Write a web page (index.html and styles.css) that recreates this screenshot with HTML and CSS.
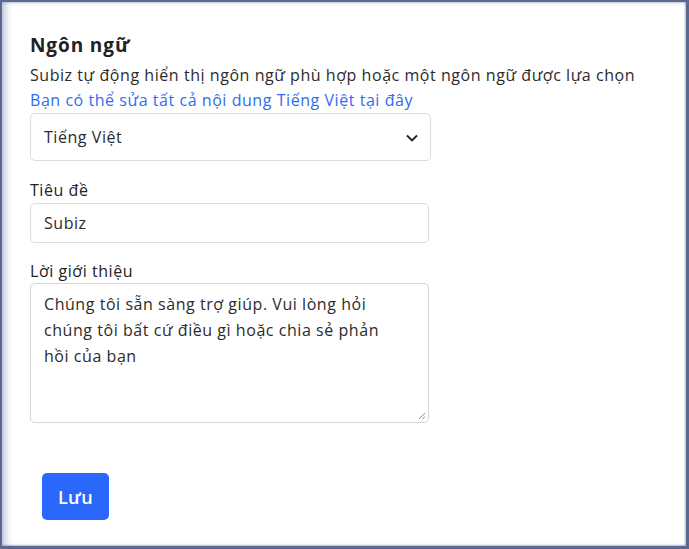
FILE: index.html
```html
<!DOCTYPE html>
<html lang="vi">
<head>
<meta charset="utf-8">
<title>Ngôn ngữ</title>
<link rel="stylesheet" href="styles.css">
</head>
<body>
<div class="frame">
  <div class="panel">
    <h2 class="title">Ngôn ngữ</h2>
    <p class="desc">Subiz tự động hiển thị ngôn ngữ phù hợp hoặc một ngôn ngữ được lựa chọn</p>
    <a class="link" href="#">Bạn có thể sửa tất cả nội dung Tiếng Việt tại đây</a>
    <div class="select">
      <span>Tiếng Việt</span>
      <svg class="chev" width="12" height="8" viewBox="0 0 12 8"><path d="M1 1.5 L6 6.5 L11 1.5" fill="none" stroke="#222" stroke-width="1.8"/></svg>
    </div>
    <label class="label">Tiêu đề</label>
    <div class="input">Subiz</div>
    <label class="label label-2">Lời giới thiệu</label>
    <div class="textarea">Chúng tôi sẵn sàng trợ giúp. Vui lòng hỏi chúng tôi bất cứ điều gì hoặc chia sẻ phản hồi của bạn
      <svg class="grip" width="8" height="8" viewBox="0 0 8 8"><path d="M7 1 L1 7 M7 4.5 L4.5 7" stroke="#888" stroke-width="1"/></svg>
    </div>
    <button class="btn">Lưu</button>
  </div>
</div>
</body>
</html>
```
FILE: styles.css
```css
html, body {
  margin: 0;
  padding: 0;
  background: #56648e;
}
.frame {
  box-sizing: border-box;
  height: 549px;
  margin: 0;
  border-style: solid;
  border-color: #5a6892;
  border-width: 2px 3px 3px 2px;
  background: #fff;
  box-shadow: inset 8px 0 7px -4px rgba(90,104,146,0.35), inset 0 2px 3px -1px rgba(90,104,146,0.35), inset -2px 0 2px -1px rgba(90,104,146,0.4), inset 0 -2px 2px -1px rgba(90,104,146,0.4);
  font-family: "Open Sans", "Noto Sans", sans-serif;
  color: #2b2b2b;
  letter-spacing: 0.55px;
}
.panel {
  display: flex;
  flex-direction: column;
  align-items: flex-start;
  padding: 29px 0 0 28px;
}
.title {
  margin: 0;
  font-size: 19px;
  line-height: 28px;
  font-weight: 700;
  letter-spacing: 0.9px;
  color: #222;
}
.desc {
  margin: 4px 0 0;
  font-size: 16px;
  line-height: 25px;
}
.link {
  font-size: 16px;
  line-height: 25px;
  color: #2f6cf0;
  text-decoration: none;
}
.select {
  box-sizing: border-box;
  width: 401px;
  height: 48px;
  margin-top: 0;
  border: 1px solid #dcdcdc;
  border-radius: 5px;
  display: flex;
  align-items: center;
  justify-content: space-between;
  padding: 0 12px 0 13px;
  font-size: 16px;
}
.chev { margin-top: 2px; }
.label {
  margin-top: 17px;
  font-size: 16px;
  line-height: 24px;
  color: #222;
}
.label-2 { margin-top: 16px; }
.input {
  box-sizing: border-box;
  width: 399px;
  height: 40px;
  margin-top: 1px;
  border: 1px solid #dcdcdc;
  border-radius: 5px;
  display: flex;
  align-items: center;
  padding: 0 13px;
  font-size: 16px;
}
.textarea {
  position: relative;
  box-sizing: border-box;
  width: 399px;
  height: 140px;
  margin-top: 0;
  border: 1px solid #d4d4d4;
  border-radius: 5px;
  padding: 7px 40px 0 13px;
  font-size: 16px;
  line-height: 26px;
}
.grip {
  position: absolute;
  right: 2px;
  bottom: 2px;
}
.btn {
  margin: 50px 0 0 12px;
  width: 67px;
  height: 47px;
  border: 0;
  border-radius: 5px;
  background: #2a67fb;
  color: #fff;
  font-family: "Open Sans", sans-serif;
  font-size: 18px;
  font-weight: 600;
  letter-spacing: 0.3px;
}
```
